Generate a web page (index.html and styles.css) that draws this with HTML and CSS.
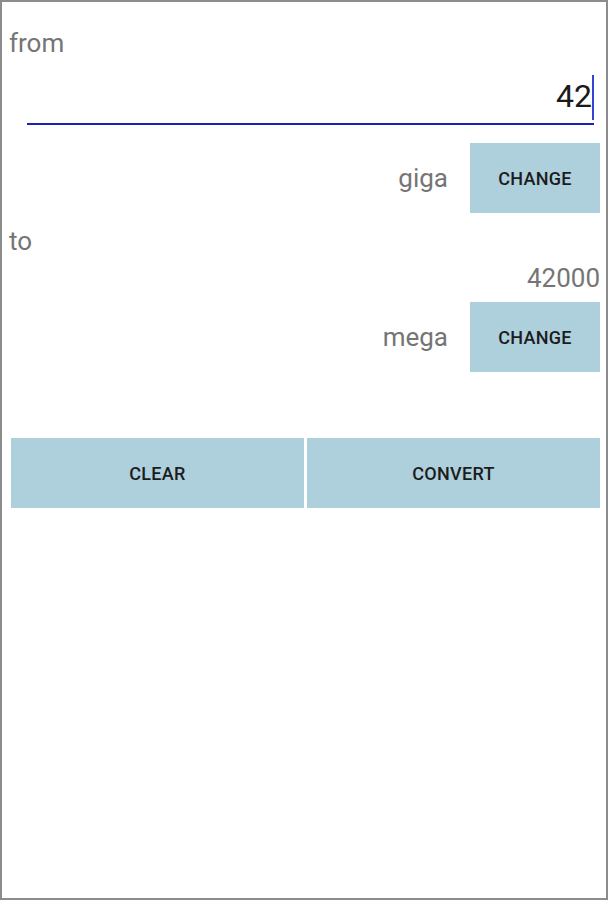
FILE: index.html
```html
<!DOCTYPE html>
<html>
<head>
  <meta charset="UTF-8">
  <meta name="viewport" content="width=device-width, initial-scale=1">
  <title>Unit converter</title>
  <link rel="stylesheet" href="styles.css">
</head>

<body>
  <div class="screen">
    <!-- source value -->
    <p class="label label-from">from</p>
    <div class="field">
      <span class="value">42</span>
    </div>
    <div class="unit-row unit-row-from">
      <span class="unit">giga</span>
      <button class="btn btn-change">CHANGE</button>
    </div>

    <!-- target value -->
    <p class="label label-to">to</p>
    <p class="result">42000</p>
    <div class="unit-row unit-row-to">
      <span class="unit">mega</span>
      <button class="btn btn-change">CHANGE</button>
    </div>

    <div class="actions">
      <button class="btn btn-action">CLEAR</button>
      <button class="btn btn-action">CONVERT</button>
    </div>
  </div>
</body>

</html>
```

FILE: styles.css
```css
html,
body {
  margin: 0;
  padding: 0;
  background: #fff;
}
body {
  font-family: Roboto, "Liberation Sans", sans-serif;
}
.screen {
  box-sizing: border-box;
  width: 608px;
  height: 900px;
  border: 2px solid #8c8c8c;
  padding: 0 6px 0 7px;
}
.label {
  margin: 0;
  font-size: 26px;
  line-height: 30px;
  color: #757575;
}
.label-from {
  margin-top: 26px;
}
.label-to {
  margin-top: 13px;
}
.field {
  margin: 19px 6px 0 18px;
  padding-bottom: 8px;
  border-bottom: 2px solid #1f22b0;
  text-align: right;
  font-size: 32px;
  line-height: 38px;
  color: #1a1a1a;
}
.value {
  padding: 2px 0 5px 0;
  border-right: 2px solid #3344d4;
}
.unit-row {
  display: flex;
  justify-content: flex-end;
  align-items: center;
  gap: 22px;
  height: 70px;
}
.unit-row-from {
  margin-top: 18px;
}
.unit-row-to {
  margin-top: 9px;
}
.unit {
  font-size: 26px;
  line-height: 30px;
  color: #757575;
}
.result {
  margin: 7px 0 0 0;
  text-align: right;
  font-size: 26px;
  line-height: 30px;
  color: #757575;
}
.btn {
  border: none;
  border-radius: 0;
  padding: 0;
  margin: 0;
  background: #aecfdc;
  color: #1c1c1c;
  font-family: Roboto, "Liberation Sans", sans-serif;
  font-size: 18px;
  font-weight: 500;
  letter-spacing: 0.3px;
  cursor: pointer;
}
.btn-change {
  width: 130px;
  height: 70px;
}
.actions {
  display: flex;
  gap: 3px;
  margin: 66px 0 0 2px;
}
.btn-action {
  flex: 1;
  height: 70px;
}
```
